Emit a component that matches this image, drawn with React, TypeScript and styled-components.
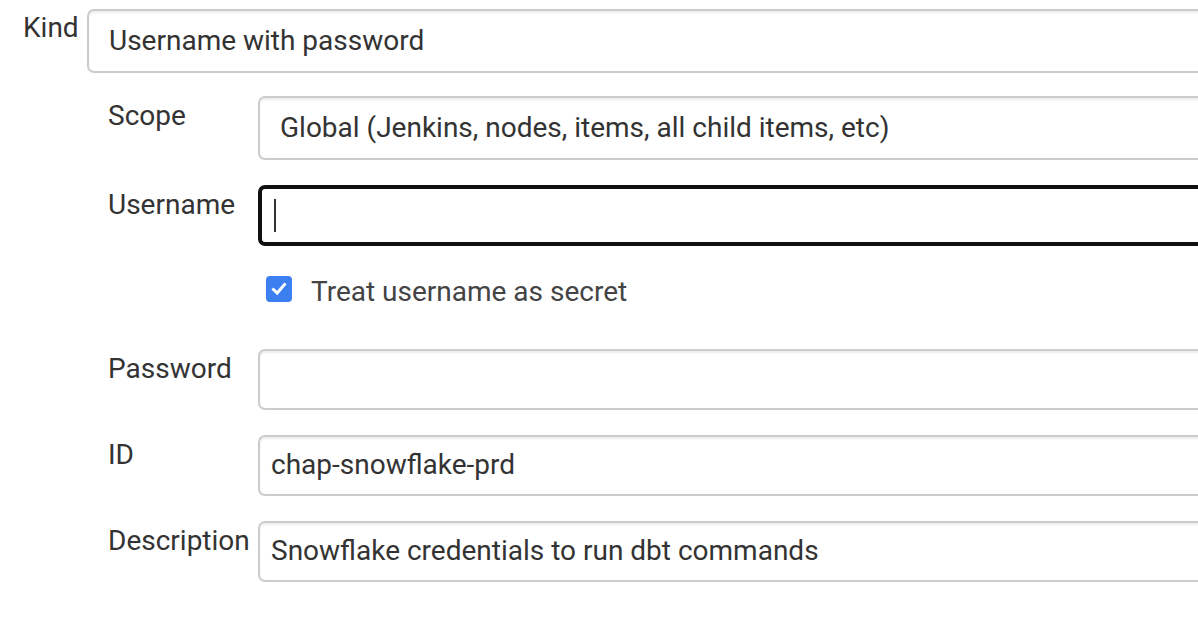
import * as React from "react"
import styled, { createGlobalStyle } from "styled-components"

const GlobalStyle = createGlobalStyle`
  body {
    margin: 0;
    background: #fff;
    font-family: Roboto, "Liberation Sans", sans-serif;
    color: #333;
    overflow: hidden;
  }
`

const Page = styled.main`
  width: 1400px;
  padding: 9px 0 0 23px;
  font-size: 28px;
`

const KindRow = styled.div`
  display: flex;
  align-items: flex-start;
`

const KindLabel = styled.label`
  width: 64px;
  flex-shrink: 0;
  padding-top: 2px;
`

const KindBody = styled.div`
  flex: 1;
  display: flex;
  flex-direction: column;
`

const Section = styled.div`
  display: flex;
  flex-direction: column;
  gap: 25px;
  padding-left: 21px;
  margin-top: 23px;
`

const Row = styled.div`
  display: flex;
  align-items: flex-start;
`

const Label = styled.label`
  width: 150px;
  flex-shrink: 0;
  padding-top: 3px;
`

const Field = styled.div<{ $select?: boolean; $focused?: boolean }>`
  flex: 1 1 auto;
  min-width: 0;
  box-sizing: border-box;
  height: ${(p) => (p.$select ? "64px" : "61px")};
  display: flex;
  align-items: center;
  padding: 0 0 2px ${(p) => (p.$select ? "20px" : "11px")};
  border: ${(p) => (p.$focused ? "4px solid #111" : "2px solid #ccc")};
  border-radius: 7px;
  box-shadow: ${(p) =>
    p.$focused ? "none" : "inset 0 2px 2px rgba(0, 0, 0, 0.075)"};
  background: #fff;
  white-space: nowrap;
  color: #333;
`

const Caret = styled.span`
  width: 2px;
  height: 33px;
  background: #333;
  margin: 2px 0 0 1px;
`

const CheckRow = styled.div`
  display: flex;
  align-items: center;
  gap: 19px;
  margin: 5px 0 22px 158px;
  height: 26px;
  color: #444;
`

const CheckText = styled.span`
  padding-top: 4px;
`

const CheckBox = styled.span`
  width: 26px;
  height: 26px;
  box-sizing: border-box;
  border-radius: 4px;
  background: #3b7ff0;
  display: flex;
  align-items: center;
  justify-content: center;
`

export default function App() {
  return (
    <>
      <GlobalStyle />
      <Page>
        <KindRow>
          <KindLabel>Kind</KindLabel>
          <KindBody>
            <Field $select>Username with password</Field>
            <Section>
              <Row>
                <Label>Scope</Label>
                <Field $select>Global (Jenkins, nodes, items, all child items, etc)</Field>
              </Row>
              <Row>
                <Label>Username</Label>
                <Field $focused>
                  <Caret />
                </Field>
              </Row>
              <CheckRow>
                <CheckBox>
                  <svg width="18" height="18" viewBox="0 0 18 18">
                    <path
                      d="M3.5 9.5 L7.2 13 L14.5 4.5"
                      fill="none"
                      stroke="#fff"
                      strokeWidth="3"
                      strokeLinecap="square"
                    />
                  </svg>
                </CheckBox>
                <CheckText>Treat username as secret</CheckText>
              </CheckRow>
              <Row>
                <Label>Password</Label>
                <Field />
              </Row>
              <Row>
                <Label>ID</Label>
                <Field>chap-snowflake-prd</Field>
              </Row>
              <Row>
                <Label>Description</Label>
                <Field>Snowflake credentials to run dbt commands</Field>
              </Row>
            </Section>
          </KindBody>
        </KindRow>
      </Page>
    </>
  )
}
